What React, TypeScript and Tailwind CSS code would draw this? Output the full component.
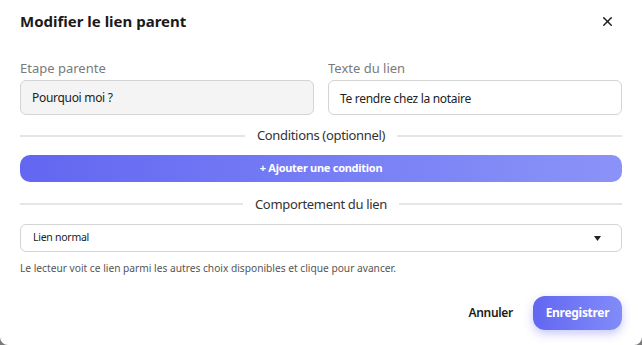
import React from 'react';
import { X } from 'lucide-react';

const Divider = ({ label }: { label: string }) => (
  <div className="flex items-center gap-3">
    <div className="h-[2px] flex-1 bg-[#e5e5e5]" />
    <span className="text-[13px] tracking-tight text-[#333]">{label}</span>
    <div className="h-[2px] flex-1 bg-[#e5e5e5]" />
  </div>
);

export default function App() {
  return (
    <div className="h-[345px] w-[642px] bg-[#7a7a7a]" style={{ fontFamily: '"Noto Sans", sans-serif' }}>
      <div className="flex h-full flex-col rounded-b-lg bg-white px-5">
        {/* Header */}
        <div className="flex h-[42px] items-center justify-between">
          <h2 className="text-[15px] font-bold text-[#1a1a1a]">Modifier le lien parent</h2>
          <button className="mr-[7px] text-[#1a1a1a]">
            <X className="h-[15px] w-[15px]" strokeWidth={2.25} />
          </button>
        </div>

        {/* Fields */}
        <div className="mt-[17px] grid grid-cols-2 gap-[14px]">
          <div>
            <label className="mb-[3px] block text-[13px] leading-[18px] text-[#7a7a7a]">Etape parente</label>
            <div className="flex h-[35px] items-center rounded-md border border-[#d4d4d4] bg-[#f4f4f4] px-[11px] text-[12px] tracking-tight text-[#222]">
              Pourquoi moi ?
            </div>
          </div>
          <div>
            <label className="mb-[3px] block text-[13px] leading-[18px] text-[#7a7a7a]">Texte du lien</label>
            <div className="flex h-[35px] items-center rounded-md border border-[#d4d4d4] bg-white px-[11px] pt-[2px] text-[12px] tracking-tight text-[#222]">
              Te rendre chez la notaire
            </div>
          </div>
        </div>

        <div className="mt-[11px]">
          <Divider label="Conditions (optionnel)" />
        </div>

        <button className="mt-[9px] flex h-[27px] items-center justify-center rounded-[10px] bg-gradient-to-r from-[#6366f1] to-[#8b93f8] text-[11px] font-bold tracking-tight text-white">
          + Ajouter une condition
        </button>

        <div className="mt-[13px]">
          <Divider label="Comportement du lien" />
        </div>

        <div className="mt-[10px] flex h-[28px] items-center justify-between rounded-md border border-[#d4d4d4] bg-white pl-[12px] pr-[20px] text-[10.5px] tracking-tight text-[#222]">
          <span>Lien normal</span>
          <svg width="7" height="5" viewBox="0 0 7 5">
            <path d="M0 0 H7 L3.5 5 Z" fill="#222" />
          </svg>
        </div>

        <p className="mt-[9px] text-[10.2px] text-[#555]">
          Le lecteur voit ce lien parmi les autres choix disponibles et clique pour avancer.
        </p>

        <div className="mt-[20px] flex items-center justify-end gap-[20px]">
          <button className="text-[12px] font-semibold tracking-tight text-[#1a1a1a]">Annuler</button>
          <button className="flex h-[34px] w-[89px] items-center justify-center rounded-xl bg-gradient-to-r from-[#6366f1] to-[#818cf8] text-[12px] font-bold tracking-tight text-white shadow-[0_4px_10px_rgba(99,102,241,0.35)]">
            Enregistrer
          </button>
        </div>
      </div>
    </div>
  );
}
